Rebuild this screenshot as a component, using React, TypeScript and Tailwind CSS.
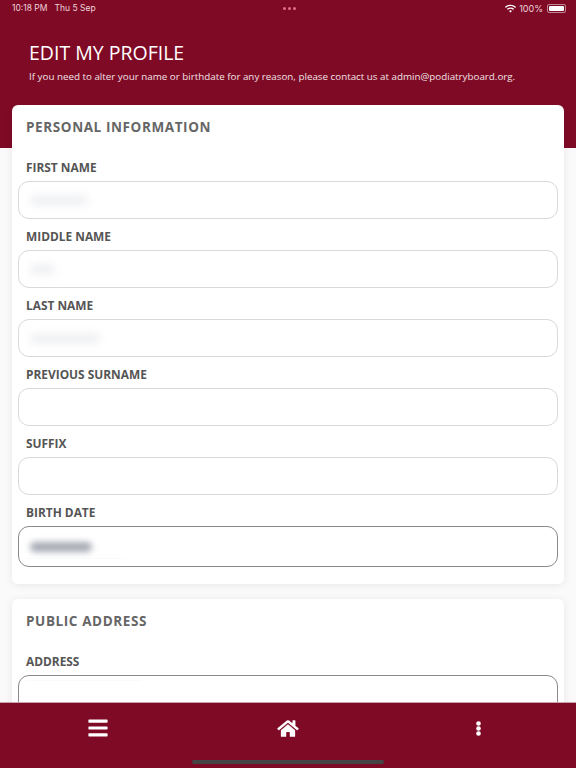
import { FaBars, FaHome, FaWifi } from 'react-icons/fa'

const fields = [
  { label: 'FIRST NAME', blur: 'w-[58px] bg-gray-300/40' },
  { label: 'MIDDLE NAME', blur: 'w-[25px] bg-gray-300/40' },
  { label: 'LAST NAME', blur: 'w-[70px] bg-gray-300/40' },
  { label: 'PREVIOUS SURNAME' },
  { label: 'SUFFIX' },
]

function Label({ text }: { text: string }) {
  return <div className="h-[31px] pl-[8px] pt-[7px] text-[11.9px] leading-[20px] font-bold text-[#555555]">{text}</div>
}

function Field({ label, blur }: { label: string; blur?: string }) {
  return (
    <div>
      <Label text={label} />
      <div className="flex h-[38px] items-center rounded-[11px] border border-[#d9d9d9] bg-white px-[11px]">
        {blur && <div className={`h-[9px] rounded-full blur-[4px] ${blur}`} />}
      </div>
    </div>
  )
}

export default function App() {
  return (
    <div className="relative flex h-[768px] w-[576px] flex-col overflow-hidden bg-[#fafafa] font-['Open_Sans',sans-serif]">
      {/* Header */}
      <div className="h-[148px] shrink-0 bg-[#7f0a26] text-white">
        <div className="flex h-[16px] items-center justify-between pl-[12px] pr-[10px] pt-[1px] font-['Inter',sans-serif] text-[8.5px] text-[#ecd3da]">
          <div className="flex w-[120px] gap-[7px]">
            <span>10:18 PM</span>
            <span>Thu 5 Sep</span>
          </div>
          <div className="flex gap-[2px]">
            <span className="h-[3px] w-[3px] rounded-full bg-[#e0708c]" />
            <span className="h-[3px] w-[3px] rounded-full bg-[#e0708c]" />
            <span className="h-[3px] w-[3px] rounded-full bg-[#e0708c]" />
          </div>
          <div className="flex w-[120px] items-center justify-end gap-[3px]">
            <FaWifi className="h-[9px] w-[11px] text-white" />
            <span className="text-[9px]">100%</span>
            <div className="ml-[1px] flex h-[9px] w-[19px] items-center rounded-[2px] border border-white/50 p-[1px]">
              <div className="h-full w-full rounded-[1px] bg-white" />
            </div>
          </div>
        </div>
        <div className="pl-[29px] pt-[24px]">
          <h1 className="text-[19.5px] leading-[26px] text-white">EDIT MY PROFILE</h1>
          <p className="mt-[3px] text-[9.8px] leading-[16px] text-[#f1e1e5]">
            If you need to alter your name or birthdate for any reason, please contact us at admin@podiatryboard.org.
          </p>
        </div>
      </div>

      {/* Content */}
      <div className="-mt-[43px] flex min-h-0 flex-1 flex-col gap-[15px] overflow-hidden px-[12px]">
        <section className="shrink-0 rounded-[6px] bg-white px-[6px] pb-[17px] shadow-[0_1px_8px_rgba(0,0,0,0.08)]">
          <h2 className="h-[45px] pl-[8px] pt-[12px] text-[13.5px] leading-[20px] font-bold tracking-[0.6px] text-[#666666]">
            PERSONAL INFORMATION
          </h2>
          {fields.map((f) => (
            <Field key={f.label} label={f.label} blur={f.blur} />
          ))}
          <Label text="BIRTH DATE" />
          <div className="relative flex h-[41px] items-center rounded-[11px] border border-[#8a8a8a] bg-white px-[11px]">
            <div className="h-[10px] w-[62px] rounded-full bg-gray-500/60 blur-[3px]" />
            <div className="absolute bottom-[7px] left-[7px] h-[1px] w-[100px] bg-gray-50" />
          </div>
        </section>

        <section className="h-[200px] shrink-0 rounded-[6px] bg-white px-[6px] shadow-[0_1px_8px_rgba(0,0,0,0.08)]">
          <h2 className="h-[45px] pl-[8px] pt-[12px] text-[13.5px] leading-[20px] font-bold tracking-[0.6px] text-[#666666]">
            PUBLIC ADDRESS
          </h2>
          <Label text="ADDRESS" />
          <div className="relative h-[41px] rounded-[11px] border border-[#8a8a8a] bg-white">
            <div className="absolute left-[7px] top-[4px] h-[1px] w-[115px] bg-gray-50" />
          </div>
        </section>
      </div>

      {/* Bottom bar */}
      <div className="relative z-10 h-[66px] shrink-0 border-t border-[#c9a3ad] bg-[#7f0a26] text-white">
        <div className="grid h-[50px] grid-cols-3 items-center justify-items-center px-[3px]">
          <FaBars className="h-[22px] w-[20px]" />
          <FaHome className="h-[19px] w-[22px]" />
          <svg viewBox="0 0 5 15" className="h-[15px] w-[5px]" fill="currentColor">
            <circle cx="2.5" cy="2.5" r="2.3" />
            <circle cx="2.5" cy="7.5" r="2.3" />
            <circle cx="2.5" cy="12.5" r="2.3" />
          </svg>
        </div>
        <div className="absolute bottom-[4px] left-[192px] h-[4px] w-[192px] rounded-full bg-[#444444]" />
      </div>
    </div>
  )
}
